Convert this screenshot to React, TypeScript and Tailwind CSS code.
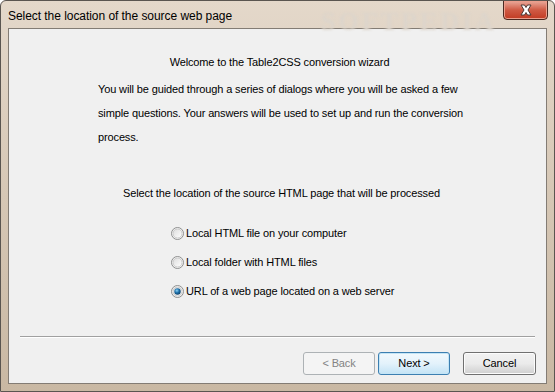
import React from "react";

function Radio({ checked }: { checked?: boolean }) {
  return (
    <svg width="13" height="13" viewBox="0 0 13 13" className="shrink-0">
      <defs>
        <linearGradient id={checked ? "rg1" : "rg0"} x1="0" y1="0" x2="1" y2="1">
          <stop offset="0" stopColor="#dcdcdc" />
          <stop offset="1" stopColor="#ffffff" />
        </linearGradient>
        <radialGradient id="dot" cx="0.4" cy="0.35" r="0.7">
          <stop offset="0" stopColor="#8ad1f5" />
          <stop offset="0.5" stopColor="#1d6fa8" />
          <stop offset="1" stopColor="#0d3c63" />
        </radialGradient>
      </defs>
      <circle cx="6.5" cy="6.5" r="6" fill="#f4f4f4" stroke="#8e8f8f" strokeWidth="1" />
      <circle cx="6.5" cy="6.5" r="4.5" fill={checked ? "url(#rg1)" : "url(#rg0)"} stroke="#c2c2c2" strokeWidth="0.8" />
      {checked && <circle cx="6.5" cy="6.5" r="3.2" fill="url(#dot)" />}
    </svg>
  );
}

function Btn({
  label,
  kind,
  w,
}: {
  label: string;
  kind: "disabled" | "default" | "normal";
  w: string;
}) {
  const cls =
    kind === "disabled"
      ? "border-[#adb2b5] bg-[#f4f4f4] text-[#838383]"
      : kind === "default"
      ? "border-[#3c7fb1] bg-gradient-to-b from-[#f2f9fd] via-[#e3f2fb] to-[#c3e3f5] text-black shadow-[inset_0_0_0_1px_#c4e5f6]"
      : "border-[#707070] bg-gradient-to-b from-[#f2f2f2] via-[#ebebeb] to-[#cfcfcf] text-black shadow-[inset_0_0_0_1px_#fcfcfc]";
  return (
    <div
      className={`${w} h-[23px] rounded-[3px] border flex items-center justify-center text-[11px] ${cls}`}
    >
      {label}
    </div>
  );
}

export default function App() {
  const font = { fontFamily: '"Liberation Sans", Arial, sans-serif' };
  return (
    <div
      className="w-[555px] h-[392px] relative overflow-hidden rounded-t-[6px] border border-[#5a5550] bg-gradient-to-b from-[#e4d8ca] via-[#d6c7b5] to-[#c9b8a3] flex flex-col"
      style={font}
    >
      {/* title bar */}
      <div className="h-[27px] flex items-start justify-between pl-[7px] pr-[6px] relative">
        <span className="text-[12px] text-black mt-[6px] tracking-[-0.05px]">
          Select the location of the source web page
        </span>
        <span className="absolute left-[320px] top-[1px] text-[26px] font-bold text-[#ddd5cb] tracking-[3px] blur-[1px] select-none" style={{ fontFamily: '"Liberation Serif", serif' }}>
          SOFTPEDIA
        </span>
        <div className="relative -mt-px w-[45px] h-[20px] rounded-b-[4px] border border-[#4b2a22] bg-gradient-to-b from-[#e9a99b] via-[#cf5a44] to-[#c23a22] flex items-center justify-center shadow-[inset_0_0_0_1px_#eb9e8c]">
          <svg width="14" height="12" viewBox="0 0 14 12">
            <path
              d="M2 1 L5.5 1 L7 3.5 L8.5 1 L12 1 L9 6 L12 11 L8.5 11 L7 8.5 L5.5 11 L2 11 L5 6 Z"
              fill="#ffffff"
              stroke="#4a3a36"
              strokeWidth="1"
              strokeLinejoin="round"
            />
          </svg>
        </div>
      </div>

      {/* client area */}
      <div className="mx-[7px] mb-[7px] flex-1 border border-[#837c74] bg-[#f0f0f0] flex flex-col text-[11px] text-black tracking-[-0.13px]">
        <div className="pt-[22px] flex flex-col">
          <div className="text-center leading-[23px] pl-[4px]">
            Welcome to the Table2CSS conversion wizard
          </div>
          <div className="pl-[89px] pr-[70px] leading-[24px] mt-[3px]">
            You will be guided through a series of dialogs where you will be asked a few simple questions. Your answers will be used to set up and run the conversion process.
          </div>
        </div>

        <div className="mt-[32px] text-center leading-[24px] pl-[8px]">
          Select the location of the source HTML page that will be processed
        </div>

        <div className="mt-[22px] pl-[162px] flex flex-col gap-[16px]">
          <label className="flex items-center gap-[2px] h-[13px]">
            <Radio /> <span>Local HTML file on your computer</span>
          </label>
          <label className="flex items-center gap-[2px] h-[13px]">
            <Radio /> <span>Local folder with HTML files</span>
          </label>
          <label className="flex items-center gap-[2px] h-[13px]">
            <Radio checked /> <span>URL of a web page located on a web server</span>
          </label>
        </div>

        <div className="flex-1" />
        <div className="mx-[11px] h-px bg-[#a0a0a0] border-b border-white box-content" />
        <div className="flex justify-end pr-[10px] pt-[14px] pb-[8px]">
          <Btn label="< Back" kind="disabled" w="w-[72px]" />
          <div className="w-[3px]" />
          <Btn label="Next >" kind="default" w="w-[72px]" />
          <div className="w-[13px]" />
          <Btn label="Cancel" kind="normal" w="w-[73px]" />
        </div>
      </div>
    </div>
  );
}
